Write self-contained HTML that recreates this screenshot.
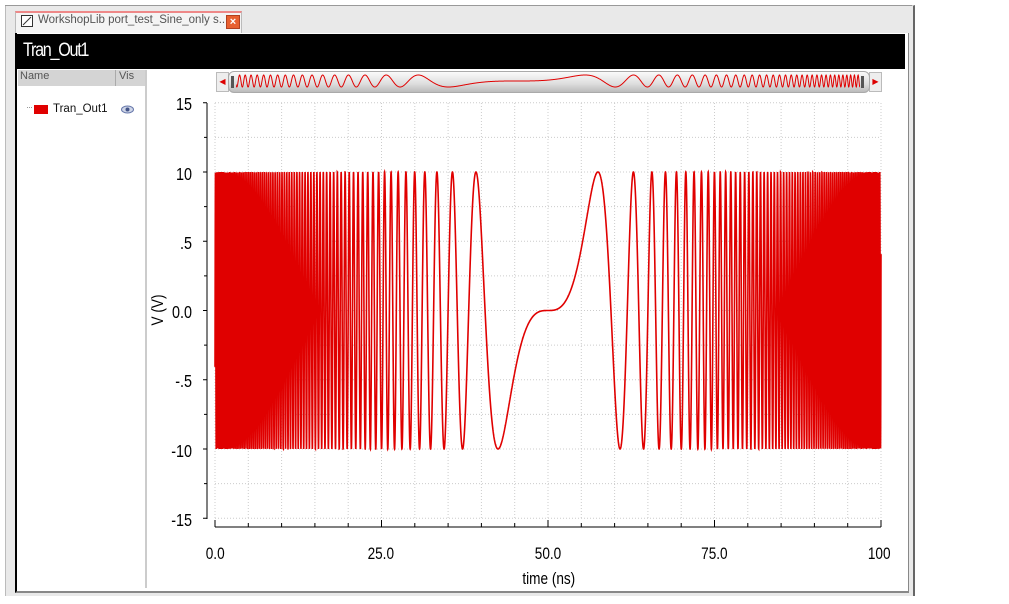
<!DOCTYPE html>
<html><head><meta charset="utf-8"><style>
html,body{margin:0;padding:0;width:1009px;height:604px;background:#fff;overflow:hidden;font-family:"Liberation Sans",sans-serif;}
.abs{position:absolute;}
</style></head><body>
<div class="abs" style="left:5px;top:5px;width:907px;height:590px;background:#e9e9e9;border-left:1px solid #bbb;border-top:1px solid #ccc;border-right:2px solid #666;"></div>
<div class="abs" style="left:5px;top:5px;width:907px;height:4px;border-top:1px solid #999;"></div>
<!-- tab -->
<div class="abs" style="left:15px;top:11px;width:225px;height:20px;background:#f4f4f4;border-top:2px solid #e88;border-left:1px solid #bbb;border-right:1px solid #bbb;"></div>
<div class="abs" style="left:21px;top:15px;width:10px;height:10px;border:1px solid #333;background:#fff;"></div>
<svg class="abs" style="left:21px;top:15px" width="12" height="12"><line x1="2" y1="10" x2="10" y2="2" stroke="#333"/></svg>
<div class="abs" style="left:38px;top:14px;font-size:11.5px;color:#555;">WorkshopLib port_test_Sine_only s...</div>
<div class="abs" style="left:226px;top:15px;width:12px;height:12px;background:#e86030;border:1px solid #b04020;color:#fff;font-size:11px;line-height:12px;text-align:center;font-weight:bold;">×</div>
<!-- inner frame -->
<div class="abs" style="left:15px;top:33px;width:891px;height:558px;background:#fff;border-left:2px solid #000;border-bottom:2px solid #888;border-right:1px solid #888;"></div>
<div class="abs" style="left:15px;top:34px;width:890px;height:35px;background:#000;"></div>
<div class="abs" style="left:23px;top:40px;color:#fff;font-size:19px;letter-spacing:-1.5px;transform:scaleX(0.85);transform-origin:left;">Tran_Out1</div>
<!-- left panel -->
<div class="abs" style="left:18px;top:70px;width:127px;height:518px;background:#fff;border-right:2px solid #ccc;"></div>
<div class="abs" style="left:18px;top:70px;width:127px;height:16px;background:#d4d4d4;"></div>
<div class="abs" style="left:115px;top:70px;width:1px;height:16px;background:#aaa;"></div>
<div class="abs" style="left:20px;top:70px;font-size:11px;color:#555;">Name</div>
<div class="abs" style="left:119px;top:70px;font-size:11px;color:#555;">Vis</div>
<div class="abs" style="left:27px;top:107px;width:5px;border-top:1px dotted #999;"></div>
<div class="abs" style="left:34px;top:105px;width:14px;height:9px;background:#e00000;"></div>
<div class="abs" style="left:53px;top:103px;font-size:11.5px;color:#111;">Tran_Out1</div>
<svg class="abs" style="left:121px;top:105px" width="13" height="9"><ellipse cx="6.5" cy="4.5" rx="6" ry="3.5" fill="#cfd6e8" stroke="#6677aa"/><circle cx="6.5" cy="4.5" r="2" fill="#445588"/></svg>
<!-- scrollbar -->
<div class="abs" style="left:216px;top:72px;width:11px;height:18px;background:#eee;border:1px solid #bbb;color:#d00;font-size:8px;line-height:18px;text-align:center;">◀</div>
<div class="abs" style="left:869px;top:72px;width:11px;height:18px;background:#eee;border:1px solid #bbb;color:#d00;font-size:8px;line-height:18px;text-align:center;">▶</div>
<div class="abs" style="left:228px;top:71px;width:640px;height:20px;border-radius:6px;background:linear-gradient(#fafafa,#ddd 60%,#bbb);border:1px solid #aaa;"></div>
<div class="abs" style="left:231px;top:76px;width:3px;height:12px;background:#555;"></div>
<div class="abs" style="left:861px;top:76px;width:3px;height:12px;background:#555;"></div>
<svg class="abs" style="left:236px;top:72px" width="624" height="18"><path id="mini" fill="none" stroke="#e00000" stroke-width="1"/></svg>
<!-- plot -->
<svg class="abs" style="left:0;top:0" width="1009" height="604" id="plot" font-family="Liberation Sans, sans-serif">
<g id="grid" stroke="#ccc" stroke-dasharray="1,2" stroke-width="1"></g>
<g id="ticks" stroke="#000" stroke-width="1"></g>
<path id="wave" fill="none" stroke="#e00000" stroke-width="1.6"/>
<g font-size="18" fill="#000" text-anchor="end" transform="scale(0.8,1)">
<text x="240" y="110">15</text><text x="240" y="180">10</text><text x="240" y="249">.5</text><text x="240" y="318">0.0</text><text x="240" y="387">-.5</text><text x="240" y="457">-10</text><text x="240" y="526">-15</text>
</g>
<g font-size="17" fill="#000" text-anchor="middle" transform="scale(0.8,1)">
<text x="269" y="559">0.0</text><text x="476" y="559">25.0</text><text x="685" y="559">50.0</text><text x="893" y="559">75.0</text><text x="1099" y="559">100</text>
<text x="686" y="584">time (ns)</text>
</g>
<text transform="translate(163,310) rotate(-90) scale(0.8,1)" font-size="17" text-anchor="middle">V (V)</text>
</svg>
<script>
var X0=215,X1=881,Y1=172,Ym1=449;
var g=document.getElementById('grid'),tk=document.getElementById('ticks'),s='',t='';
function yv(v){return 310.5-v*138.5;}
for(var i=0;i<=20;i++){var x=X0+(X1-X0)*i/20;s+='<line x1="'+x+'" y1="103" x2="'+x+'" y2="519"/>';t+='<line x1="'+x+'" y1="'+(i%5==0?520:523)+'" x2="'+x+'" y2="527"/>';}
for(var j=-6;j<=6;j++){var y=yv(j*0.25);s+='<line x1="'+X0+'" y1="'+y+'" x2="'+X1+'" y2="'+y+'"/>';t+='<line x1="'+(j%2==0?203:204)+'" y1="'+y+'" x2="207" y2="'+y+'"/>';}
t+='<line x1="207" y1="103" x2="207" y2="519"/><line x1="215" y1="527" x2="881" y2="527"/>';
g.innerHTML=s;tk.innerHTML=t;
var a=0.003723,d='';
for(var k=0;k<=12000;k++){var tt=100*k/12000;var v=Math.sin(a*Math.pow(tt-50,3));d+=(k?'L':'M')+(X0+(X1-X0)*tt/100).toFixed(2)+' '+yv(v).toFixed(2);}
document.getElementById('wave').setAttribute('d',d);
var m='';for(var k=0;k<=3000;k++){var tt=100*k/3000;var v=Math.sin(0.0012*Math.pow(tt-45,3));m+=(k?'L':'M')+(624*tt/100).toFixed(2)+' '+(9-v*6).toFixed(2);}
document.getElementById('mini').setAttribute('d',m);
</script>
</body></html>
